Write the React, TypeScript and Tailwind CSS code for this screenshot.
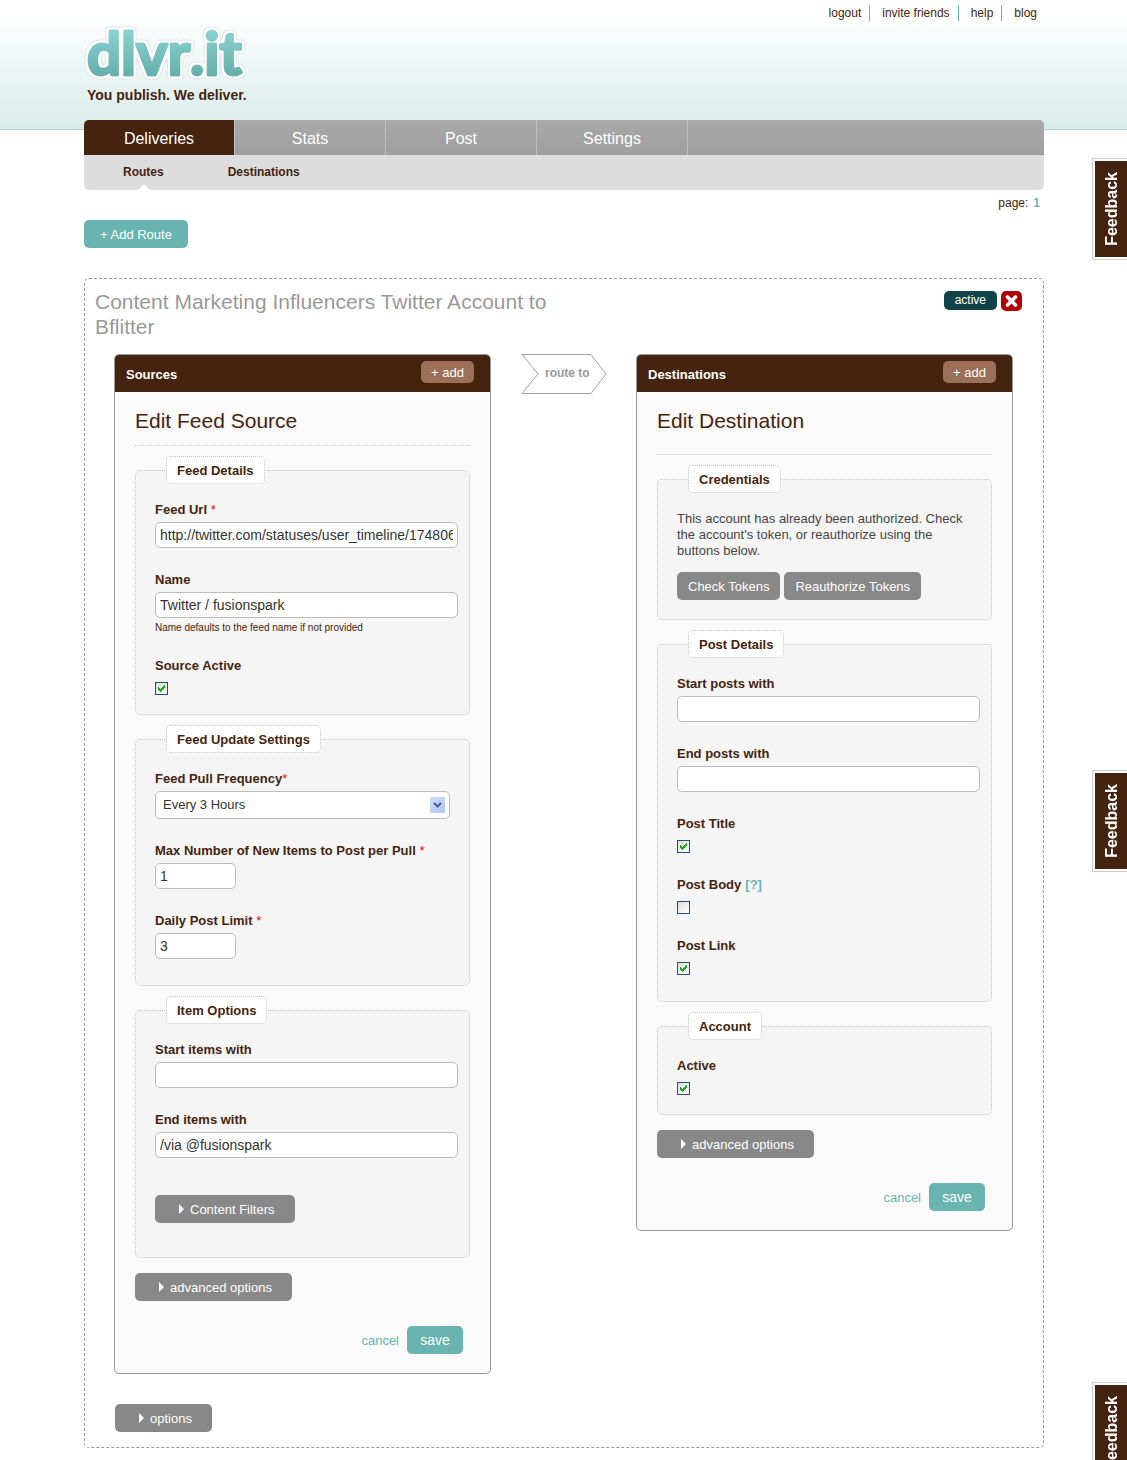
import { useId, type ReactNode } from "react";
import clsx from "clsx";

function Logo() {
  return (
    <a href="#home" className="mt-[24px] block w-[168px]">
      <svg viewBox="0 0 168 60" className="block h-[60px] w-[168px] overflow-visible">
        <defs>
          <linearGradient id="logo-teal" gradientUnits="userSpaceOnUse" x1="0" y1="6" x2="0" y2="53">
            <stop offset="0" stopColor="#8bd3d1" />
            <stop offset="1" stopColor="#64aeab" />
          </linearGradient>
          <filter id="logo-outline" filterUnits="userSpaceOnUse" x="-4" y="-4" width="176" height="68">
            <feMorphology in="SourceAlpha" operator="dilate" radius="2" result="grown" />
            <feGaussianBlur in="grown" stdDeviation="1.2" result="soft" />
            <feComponentTransfer in="soft" result="edge">
              <feFuncA type="linear" slope="4" intercept="-0.4" />
            </feComponentTransfer>
            <feFlood floodColor="#e3e7e8" />
            <feComposite in2="edge" operator="in" result="grey" />
            <feComponentTransfer in="soft" result="inner">
              <feFuncA type="linear" slope="4" intercept="-1.6" />
            </feComponentTransfer>
            <feFlood floodColor="#ffffff" />
            <feComposite in2="inner" operator="in" result="white" />
            <feMerge>
              <feMergeNode in="grey" />
              <feMergeNode in="white" />
              <feMergeNode in="SourceGraphic" />
            </feMerge>
          </filter>
        </defs>
        <text
          x="3"
          y="51"
          fontFamily="Lato, sans-serif"
          fontWeight="700"
          fontSize="60"
          fill="url(#logo-teal)"
          stroke="url(#logo-teal)"
          strokeWidth="3"
          strokeLinejoin="round"
          strokeLinecap="round"
          filter="url(#logo-outline)"
          className="[font-kerning:none]"
        >
          dlvr.it
        </text>
      </svg>
      <span className="ml-[3px] block text-[14px] leading-[22px] font-bold whitespace-nowrap text-[#44240e]">
        You publish. We deliver.
      </span>
    </a>
  );
}

function TopLinks() {
  const links = ["logout", "invite friends", "help", "blog"];
  return (
    <ul className="flex h-[26px] items-start gap-1 pt-[5px] text-[12px] leading-[16px]">
      {links.map((l, i) => (
        <li key={l} className={clsx("bg-white pl-[8px]", i < links.length - 1 ? "border-r border-[#69b3b0] pr-[8px]" : "pr-[7px]")}>
          <a href={"#" + l.replace(" ", "-")}>{l}</a>
        </li>
      ))}
    </ul>
  );
}

function Nav() {
  return (
    <nav>
      <ul className="flex h-[35px] overflow-hidden rounded-t-[5px] bg-linear-to-b from-[#a9a9a9] to-[#9f9f9f] text-[16px] text-white">
        {["Deliveries", "Stats", "Post", "Settings"].map((t, i) => (
          <li key={t} className="w-[151px] border-r border-[#c0c0c0]">
            <a href={"#" + t.toLowerCase()} className={clsx("block h-full text-center leading-[37px]", i === 0 && "bg-[#44240e]")}>
              {t}
            </a>
          </li>
        ))}
      </ul>
      <ul className="flex h-[35px] gap-[64px] rounded-b-[5px] bg-[#dddddd] pl-[39px] text-[12px] leading-[35px] font-bold">
        <li className="relative">
          <a href="#routes">Routes</a>
          <svg viewBox="0 0 12 6" className="absolute bottom-0 left-[15px] h-[6px] w-[12px]" aria-hidden="true">
            <path d="M6 0 12 6H0z" fill="#fff" />
          </svg>
        </li>
        <li>
          <a href="#destinations">Destinations</a>
        </li>
      </ul>
    </nav>
  );
}

function ExpandButton({ children, className }: { children: ReactNode; className?: string }) {
  return (
    <button
      type="button"
      className={clsx("flex h-[28px] items-center gap-[6px] rounded-[5px] bg-[#888888] pr-[20px] pl-[24px] text-[13px] text-white", className)}
    >
      <svg viewBox="0 0 5 10" className="h-[10px] w-[5px]" aria-hidden="true">
        <path d="M0 0 5 5 0 10z" fill="#fff" />
      </svg>
      <span className="pt-[2px]">{children}</span>
    </button>
  );
}

function Group({ title, className, children }: { title: string; className?: string; children: ReactNode }) {
  return (
    <fieldset className={clsx("mt-[10px] min-w-0 rounded-[5px] border border-dotted border-[#c4c4c4] bg-[#f5f5f5]", className)}>
      <legend className="ml-[30px] h-[28px] rounded-[5px] border border-dotted border-[#c4c4c4] bg-white px-[10px] pt-px text-[13px] leading-[26px] font-bold">
        {title}
      </legend>
      <div className="flex flex-col items-start gap-[24px] pt-[18px] pr-[11px] pl-[19px]">{children}</div>
    </fieldset>
  );
}

const labelClass = "block text-[13px] leading-[16px] font-bold";
const inputClass = "mt-[4px] block h-[26px] rounded-[5px] border border-[#bbbbbb] bg-white px-[4px] text-[14px] text-[#333333]";

function Star() {
  return <span className="font-normal text-[#ff0000]">*</span>;
}

function TextField({ label, value = "", required, short, hint }: { label: string; value?: string; required?: boolean; short?: boolean; hint?: string }) {
  const id = useId();
  return (
    <div className="w-full">
      <label htmlFor={id} className={labelClass}>
        {label} {required && <Star />}
      </label>
      <input id={id} type="text" defaultValue={value} className={clsx(inputClass, short ? "w-[81px]" : "w-full")} />
      {hint && <p className="mt-[4px] text-[10px] leading-[12px]">{hint}</p>}
    </div>
  );
}

function CheckField({ label, checked, help }: { label: string; checked?: boolean; help?: boolean }) {
  const id = useId();
  return (
    <div>
      <div className={labelClass}>
        <label htmlFor={id}>{label}</label>
        {help && (
          <a href="#post-body-help" className="ml-[4px] text-[#69b3b0]">
            [?]
          </a>
        )}
      </div>
      <div className="mt-[8px] grid h-[13px] w-[13px] place-items-center">
        <input
          id={id}
          type="checkbox"
          defaultChecked={checked}
          className="peer [grid-area:1/1] m-0 h-[13px] w-[13px] appearance-none border border-[#1c5180] bg-linear-to-br from-[#dcdcd7] to-white"
        />
        <svg viewBox="0 0 7 7" shapeRendering="crispEdges" className="pointer-events-none [grid-area:1/1] hidden h-[7px] w-[7px] peer-checked:block" aria-hidden="true">
          <path d="M0 2h1v1h1v1h1v-1h1v-1h1v-1h1v-1h1v3h-1v1h-1v1h-1v1h-1v1h-1v-1h-1v-1h-1z" fill="#21a121" />
        </svg>
      </div>
    </div>
  );
}

function FrequencyField() {
  const id = useId();
  return (
    <div className="w-full">
      <label htmlFor={id} className={labelClass}>
        Feed Pull Frequency
        <Star />
      </label>
      <div className="relative mt-[4px] mr-[8px]">
        <select id={id} defaultValue="3" className="block h-[28px] w-full appearance-none rounded-[5px] border border-[#bbbbbb] bg-white pl-[7px] text-[13px] text-[#333333]">
          <option value="3">Every 3 Hours</option>
        </select>
        <svg viewBox="0 0 15 16" className="pointer-events-none absolute top-[6px] right-[5px] h-[16px] w-[15px]" aria-hidden="true">
          <defs>
            <linearGradient id="drop-blue" x1="0" y1="0" x2="1" y2="1">
              <stop offset="0" stopColor="#d0ddfc" />
              <stop offset="1" stopColor="#aec6f8" />
            </linearGradient>
          </defs>
          <rect width="15" height="16" rx="1" fill="url(#drop-blue)" />
          <path d="M4 6l3.500 3.500L11 6" fill="none" stroke="#4d6185" strokeWidth="2.200" />
        </svg>
      </div>
    </div>
  );
}

function Panel({ title, heading, headingClass, children }: { title: string; heading: string; headingClass: string; children: ReactNode }) {
  return (
    <section className="min-w-0 overflow-hidden rounded-[5px] border border-[#999999] bg-[#fafafa]">
      <header className="flex h-[37px] items-start justify-between bg-[#44240e] pt-[6px] pr-[16px] pl-[11px] text-white">
        <h2 className="text-[13px] leading-[28px] font-bold">{title}</h2>
        <button type="button" className="h-[22px] rounded-[5px] bg-[#9b6f58] px-[10px] pt-px text-[13px] leading-[21px]">
          + add
        </button>
      </header>
      <div className="px-[20px] pt-[16px] pb-[19px]">
        <h3 className={clsx("border-b border-dotted border-[#c4c4c4] text-[21px] leading-[25px]", headingClass)}>{heading}</h3>
        {children}
        <ExpandButton className="mt-[15px]">advanced options</ExpandButton>
        <div className="mt-[25px] flex items-center justify-end gap-[8px] pr-[7px]">
          <a href="#cancel" className="pt-[2px] text-[13px] text-[#69b3b0]">
            cancel
          </a>
          <button type="submit" className="h-[28px] w-[56px] rounded-[5px] bg-[#69b3b0] text-[14px] text-white">
            save
          </button>
        </div>
      </div>
    </section>
  );
}

function RouteArrow() {
  return (
    <svg viewBox="0 0 86 40" className="mx-auto h-[40px] w-[86px]">
      <path d="M1 .5H70L85 20 70 39.500H1L17 20z" fill="#fff" stroke="#a0a0a0" />
      <text x="24" y="23" fontFamily="Liberation Sans, sans-serif" fontSize="12" fontWeight="700" fill="#999999">
        route to
      </text>
    </svg>
  );
}

function FeedbackTab() {
  return (
    <a href="#feedback" className="block h-[102px] w-[35px] shrink-0 border border-r-0 border-[#cccccc] bg-white py-[2px] pl-[2px]">
      <span className="flex h-full w-full items-center justify-center bg-[#44240e] pl-[2px] text-white">
        <span className="rotate-180 text-[16px] leading-[20px] font-bold [writing-mode:vertical-rl]">Feedback</span>
      </span>
    </a>
  );
}

export default function App() {
  return (
    <div className="relative min-h-screen overflow-hidden bg-white pb-[12px] font-['Liberation_Sans',Arial,sans-serif] text-[#44240e]">
      <header className="h-[130px] border-b border-[#afd4d1] bg-linear-to-b from-white from-10% to-[#d9ecea] pl-px">
        <div className="mx-auto flex max-w-[960px] items-start justify-between">
          <Logo />
          <TopLinks />
        </div>
      </header>
      <div className="-mt-[10px] pl-px">
        <main className="relative mx-auto max-w-[960px]">
          <Nav />
          <div className="flex justify-end gap-[5px] pt-[5px] pr-[4px] text-[12px] leading-[17px]">
            <span>page:</span>
            <a href="#page-1" className="font-bold text-[#69b3b0]">
              1
            </a>
          </div>
          <button type="button" className="mt-[8px] block h-[28px] rounded-[5px] bg-[#69b3b0] px-[16px] pt-[2px] text-[13px] text-white">
            + Add Route
          </button>

          <article className="mt-[30px] rounded-[5px] border border-dashed border-[#999999] pt-[10px] pr-[30px] pb-[15px] pl-[29px]">
            <div className="-mr-[9px] -ml-[19px] flex items-start justify-between">
              <h1 className="max-w-[470px] text-[21px] leading-[25px] text-[#999999]">
                Content Marketing Influencers Twitter Account to Bflitter
              </h1>
              <div className="mt-[2px] flex gap-[4px]">
                <button type="button" className="h-[19px] rounded-[5px] bg-[#114448] px-[11px] text-[12px] leading-[19px] text-white">
                  active
                </button>
                <button type="button" aria-label="Delete route" className="h-[20px] w-[21px] rounded-[5px] bg-[#b00000]">
                  <svg viewBox="0 0 21 20" className="block h-[20px] w-[21px]" aria-hidden="true">
                    <path d="M6.500 6 14.500 14M14.500 6 6.500 14" stroke="#fff" strokeWidth="3.600" strokeLinecap="round" />
                  </svg>
                </button>
              </div>
            </div>

            <form className="mt-[15px] grid grid-cols-[minmax(0,1fr)_145px_minmax(0,1fr)] items-start" onSubmit={(e) => e.preventDefault()}>
              <Panel title="Sources" heading="Edit Feed Source" headingClass="pb-[12px]">
                <Group title="Feed Details" className="pb-[19px]">
                  <TextField label="Feed Url" required value="http://twitter.com/statuses/user_timeline/174806" />
                  <TextField label="Name" value="Twitter / fusionspark" hint="Name defaults to the feed name if not provided" />
                  <CheckField label="Source Active" checked />
                </Group>
                <Group title="Feed Update Settings" className="pb-[26px]">
                  <FrequencyField />
                  <TextField label="Max Number of New Items to Post per Pull" required short value="1" />
                  <TextField label="Daily Post Limit" required short value="3" />
                </Group>
                <Group title="Item Options" className="pb-[34px]">
                  <TextField label="Start items with" />
                  <TextField label="End items with" value="/via @fusionspark" />
                  <ExpandButton className="mt-[13px]">Content Filters</ExpandButton>
                </Group>
              </Panel>

              <RouteArrow />

              <Panel title="Destinations" heading="Edit Destination" headingClass="pb-[21px]">
                <Group title="Credentials" className="pb-[19px]">
                  <div>
                    <p className="pr-[12px] text-[13px] leading-[16px] text-[#444444]">
                      This account has already been authorized. Check the account's token, or reauthorize using the buttons below.
                    </p>
                    <div className="mt-[13px] flex gap-[4px] text-[13px] text-white">
                      <button type="button" className="h-[28px] rounded-[5px] bg-[#888888] px-[11px] pt-px">
                        Check Tokens
                      </button>
                      <button type="button" className="h-[28px] rounded-[5px] bg-[#888888] px-[11px] pt-px">
                        Reauthorize Tokens
                      </button>
                    </div>
                  </div>
                </Group>
                <Group title="Post Details" className="pb-[26px]">
                  <TextField label="Start posts with" />
                  <TextField label="End posts with" />
                  <CheckField label="Post Title" checked />
                  <CheckField label="Post Body" help />
                  <CheckField label="Post Link" checked />
                </Group>
                <Group title="Account" className="pb-[19px]">
                  <CheckField label="Active" checked />
                </Group>
              </Panel>
            </form>

            <ExpandButton className="mt-[30px] ml-px">options</ExpandButton>
          </article>
        </main>
      </div>

      <aside className="absolute top-[158px] right-0 flex flex-col gap-[510px]">
        <FeedbackTab />
        <FeedbackTab />
        <FeedbackTab />
      </aside>
    </div>
  );
}
